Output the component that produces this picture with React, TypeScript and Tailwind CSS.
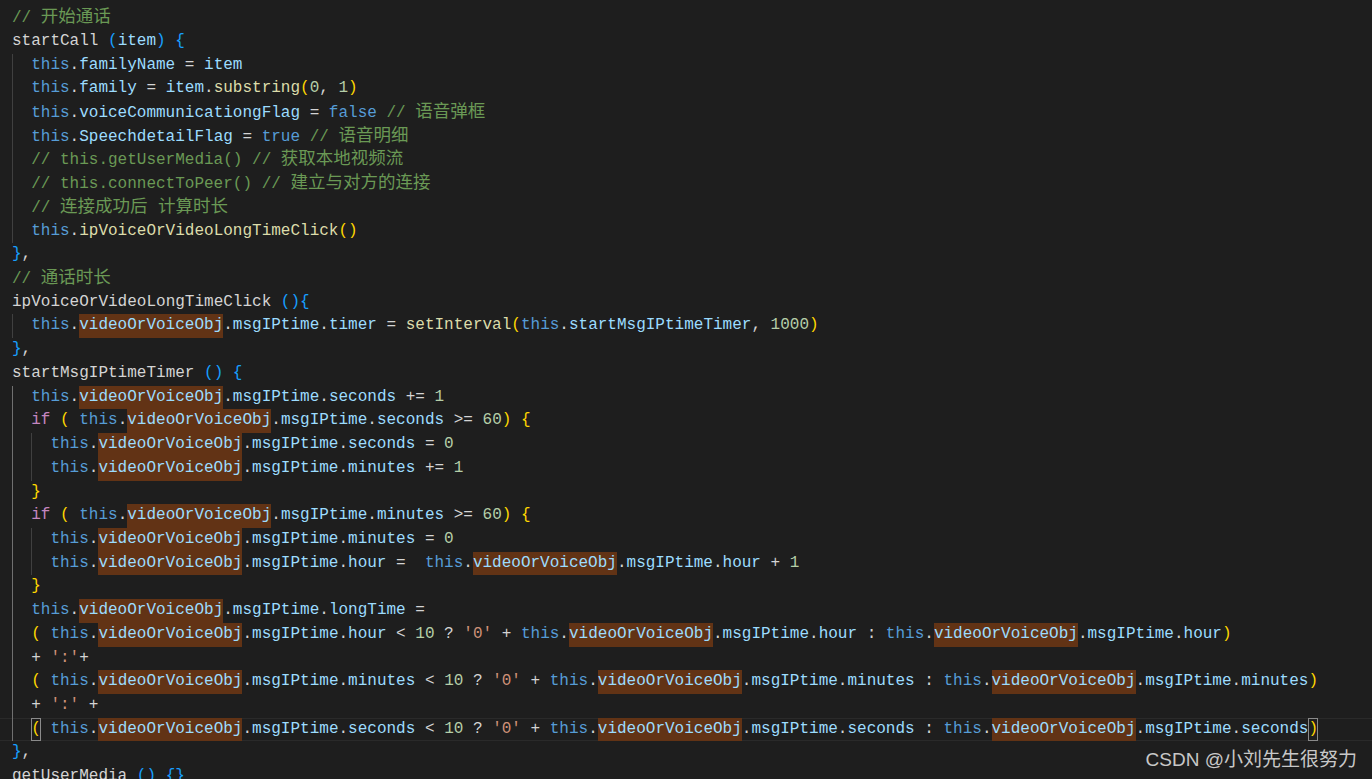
import React from 'react';

type Tok = [string, string];

interface Line {
  guides?: string[];
  current?: boolean;
  toks: Tok[];
}

// token colours, VS Code dark+
const tokClass: Record<string, string> = {
  p: 'text-[#d4d4d4]',
  k: 'text-[#569cd6]',
  v: 'text-[#9cdcfe]',
  f: 'text-[#dcdcaa]',
  n: 'text-[#b5cea8]',
  s: 'text-[#ce9178]',
  c: 'text-[#6a9955]',
  z: 'text-[#6a9955] text-[17.5px]',
  i: 'text-[#c586c0]',
  y: 'text-[#ffd700]',
  b: 'text-[#179fff]',
  h: 'text-[#9cdcfe] bg-[#623315] inline-block h-[23.73px] align-top',
  m: 'text-[#ffd700] inline-block h-[23.73px] align-top outline outline-[#8a8a8a] -outline-offset-1',
};

const I = 'border-[#404040]';
const A = 'border-[#707070]';

const obj = (x: string): Tok[] => [
  ['k', 'this'],
  ['p', '.'],
  ['h', 'videoOrVoiceObj'],
  ['p', '.'],
  ['v', 'msgIPtime'],
  ['p', '.'],
  ['v', x],
];

const timePart = (x: string, m: boolean): Tok[] => [
  [m ? 'm' : 'y', '('],
  ['p', ' '],
  ...obj(x),
  ['p', ' < '],
  ['n', '10'],
  ['p', ' ? '],
  ['s', "'0'"],
  ['p', ' + '],
  ...obj(x),
  ['p', ' : '],
  ...obj(x),
  [m ? 'm' : 'y', ')'],
];

const lines: Line[] = [
  { toks: [['b', '}'], ['p', ',']] },
  { toks: [['c', '// '], ['z', '开始通话']] },
  { toks: [['p', 'startCall '], ['b', '('], ['v', 'item'], ['b', ')'], ['p', ' '], ['b', '{']] },
  { guides: [I], toks: [['k', 'this'], ['p', '.'], ['v', 'familyName'], ['p', ' = '], ['v', 'item']] },
  {
    guides: [I],
    toks: [
      ['k', 'this'], ['p', '.'], ['v', 'family'], ['p', ' = '], ['v', 'item'], ['p', '.'],
      ['f', 'substring'], ['y', '('], ['n', '0'], ['p', ', '], ['n', '1'], ['y', ')'],
    ],
  },
  {
    guides: [I],
    toks: [['k', 'this'], ['p', '.'], ['v', 'voiceCommunicationgFlag'], ['p', ' = '], ['k', 'false'], ['c', ' // '], ['z', '语音弹框']],
  },
  {
    guides: [I],
    toks: [['k', 'this'], ['p', '.'], ['v', 'SpeechdetailFlag'], ['p', ' = '], ['k', 'true'], ['c', ' // '], ['z', '语音明细']],
  },
  { guides: [I], toks: [['c', '// this.getUserMedia() // '], ['z', '获取本地视频流']] },
  { guides: [I], toks: [['c', '// this.connectToPeer() // '], ['z', '建立与对方的连接']] },
  { guides: [I], toks: [['c', '// '], ['z', '连接成功后 计算时长']] },
  { guides: [I], toks: [['k', 'this'], ['p', '.'], ['f', 'ipVoiceOrVideoLongTimeClick'], ['y', '()']] },
  { toks: [['b', '}'], ['p', ',']] },
  { toks: [['c', '// '], ['z', '通话时长']] },
  { toks: [['p', 'ipVoiceOrVideoLongTimeClick '], ['b', '(){']] },
  {
    guides: [I],
    toks: [
      ...obj('timer'), ['p', ' = '], ['f', 'setInterval'], ['y', '('], ['k', 'this'], ['p', '.'],
      ['v', 'startMsgIPtimeTimer'], ['p', ', '], ['n', '1000'], ['y', ')'],
    ],
  },
  { toks: [['b', '}'], ['p', ',']] },
  { toks: [['p', 'startMsgIPtimeTimer '], ['b', '() {']] },
  { guides: [A], toks: [...obj('seconds'), ['p', ' += '], ['n', '1']] },
  {
    guides: [A],
    toks: [['i', 'if'], ['p', ' '], ['y', '('], ['p', ' '], ...obj('seconds'), ['p', ' >= '], ['n', '60'], ['y', ')'], ['p', ' '], ['y', '{']],
  },
  { guides: [A, I], toks: [...obj('seconds'), ['p', ' = '], ['n', '0']] },
  { guides: [A, I], toks: [...obj('minutes'), ['p', ' += '], ['n', '1']] },
  { guides: [A], toks: [['y', '}']] },
  {
    guides: [A],
    toks: [['i', 'if'], ['p', ' '], ['y', '('], ['p', ' '], ...obj('minutes'), ['p', ' >= '], ['n', '60'], ['y', ')'], ['p', ' '], ['y', '{']],
  },
  { guides: [A, I], toks: [...obj('minutes'), ['p', ' = '], ['n', '0']] },
  { guides: [A, I], toks: [...obj('hour'), ['p', ' =  '], ...obj('hour'), ['p', ' + '], ['n', '1']] },
  { guides: [A], toks: [['y', '}']] },
  { guides: [A], toks: [...obj('longTime'), ['p', ' =']] },
  { guides: [A], toks: timePart('hour', false) },
  { guides: [A], toks: [['p', '+ '], ['s', "':'"], ['p', '+']] },
  { guides: [A], toks: timePart('minutes', false) },
  { guides: [A], toks: [['p', '+ '], ['s', "':'"], ['p', ' +']] },
  { guides: [A], current: true, toks: timePart('seconds', true) },
  { toks: [['b', '}'], ['p', ',']] },
  { toks: [['p', 'getUserMedia '], ['b', '() {}']] },
];

const CodeLine: React.FC<{ line: Line }> = ({ line }) => (
  <div
    className={
      'flex h-[23.73px] pl-[12px] ' +
      (line.current ? 'shadow-[inset_0_1px_0_#2a2a2a,inset_0_-1px_0_#2a2a2a]' : '')
    }
  >
    {(line.guides || []).map((g, i) => (
      <span key={i} className={'w-[19.2px] shrink-0 border-l ' + g} />
    ))}
    <span className="whitespace-pre leading-[23.73px]">
      {line.toks.map(([t, s], i) => (
        <span key={i} className={tokClass[t]}>
          {s}
        </span>
      ))}
    </span>
  </div>
);

export default function App() {
  return (
    <div className="relative w-[1372px] h-[779px] overflow-hidden bg-[#1e1e1e]">
      <div className="-mt-[17.6px] font-['Liberation_Mono','Noto_Sans_CJK_SC',monospace] text-[16px]">
        {lines.map((l, i) => (
          <CodeLine key={i} line={l} />
        ))}
      </div>

      {/* watermark */}
      <div className="absolute right-[15px] top-[747px] text-[19px] leading-[26px] text-[#c8c8c8] font-['Liberation_Sans','Noto_Sans_CJK_SC',sans-serif]">
        CSDN @小刘先生很努力
      </div>
    </div>
  );
}
